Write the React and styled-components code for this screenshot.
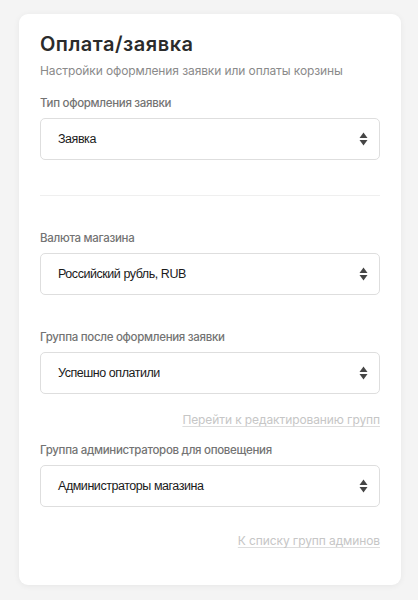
import React from 'react'
import styled, { createGlobalStyle } from 'styled-components'

const GlobalStyle = createGlobalStyle`
  html, body {
    margin: 0;
    padding: 0;
    background: #f4f4f4;
  }
  body {
    font-family: Inter, "Liberation Sans", sans-serif;
    -webkit-font-smoothing: antialiased;
  }
`

const Page = styled.div`
  padding: 14px 17px 17px 19px;
`

const Card = styled.div`
  background: #fff;
  border-radius: 9px;
  box-shadow: 0 1px 6px rgba(0, 0, 0, 0.06);
  padding: 17px 21px 36px 21px;
  display: flex;
  flex-direction: column;
`

const Title = styled.h1`
  margin: 0;
  font-size: 20px;
  font-weight: 600;
  color: #2b2b2b;
  letter-spacing: 0.5px;
  line-height: 26px;
`

const Subtitle = styled.p`
  margin: 6px 0 0;
  font-size: 12px;
  line-height: 16px;
  color: #8a8a8a;
  letter-spacing: -0.1px;
`

const Field = styled.div`
  display: flex;
  flex-direction: column;
  margin-top: ${p => p.$top}px;
`

const Label = styled.label`
  font-size: 11.5px;
  font-weight: 500;
  color: #737373;
  letter-spacing: -0.3px;
  line-height: 16px;
  margin-bottom: 7px;
`

const SelectBox = styled.div`
  height: 42px;
  box-sizing: border-box;
  border: 1px solid #dedede;
  border-radius: 5px;
  display: flex;
  align-items: center;
  justify-content: space-between;
  padding: 0 11px 0 17px;
  font-family: "Liberation Sans", Arial, sans-serif;
  font-size: 12.5px;
  letter-spacing: -0.45px;
  color: #1a1a1a;
`

const Divider = styled.hr`
  border: none;
  border-top: 1px solid #efefef;
  margin: 35px 0 0;
`

const LinkRow = styled.div`
  display: flex;
  justify-content: flex-end;
  margin-top: ${p => p.$top}px;
`

const TextLink = styled.a`
  font-size: 12px;
  line-height: 16px;
  color: #c6c6c6;
  letter-spacing: -0.1px;
  text-decoration: underline;
  text-decoration-color: #dddddd;
  text-underline-offset: 2px;
  cursor: pointer;
`

const Arrows = () => (
  <svg width="9" height="14" viewBox="0 0 9 14">
    <path d="M4.5 0.5 L8.5 6 L0.5 6 Z" fill="#454545" />
    <path d="M4.5 13.5 L8.5 8 L0.5 8 Z" fill="#454545" />
  </svg>
)

const Select = ({ value }) => (
  <SelectBox>
    <span>{value}</span>
    <Arrows />
  </SelectBox>
)

export default function App() {
  return (
    <Page>
      <GlobalStyle />
      <Card>
        <Title>Оплата/заявка</Title>
        <Subtitle>Настройки оформления заявки или оплаты корзины</Subtitle>

        <Field $top={16}>
          <Label>Тип оформления заявки</Label>
          <Select value="Заявка" />
        </Field>

        <Divider />

        <Field $top={34}>
          <Label>Валюта магазина</Label>
          <Select value="Российский рубль, RUB" />
        </Field>

        <Field $top={34}>
          <Label>Группа после оформления заявки</Label>
          <Select value="Успешно оплатили" />
        </Field>

        <LinkRow $top={18}>
          <TextLink>Перейти к редактированию групп</TextLink>
        </LinkRow>

        <Field $top={14}>
          <Label>Группа администраторов для оповещения</Label>
          <Select value="Администраторы магазина" />
        </Field>

        <LinkRow $top={26}>
          <TextLink>К списку групп админов</TextLink>
        </LinkRow>
      </Card>
    </Page>
  )
}
